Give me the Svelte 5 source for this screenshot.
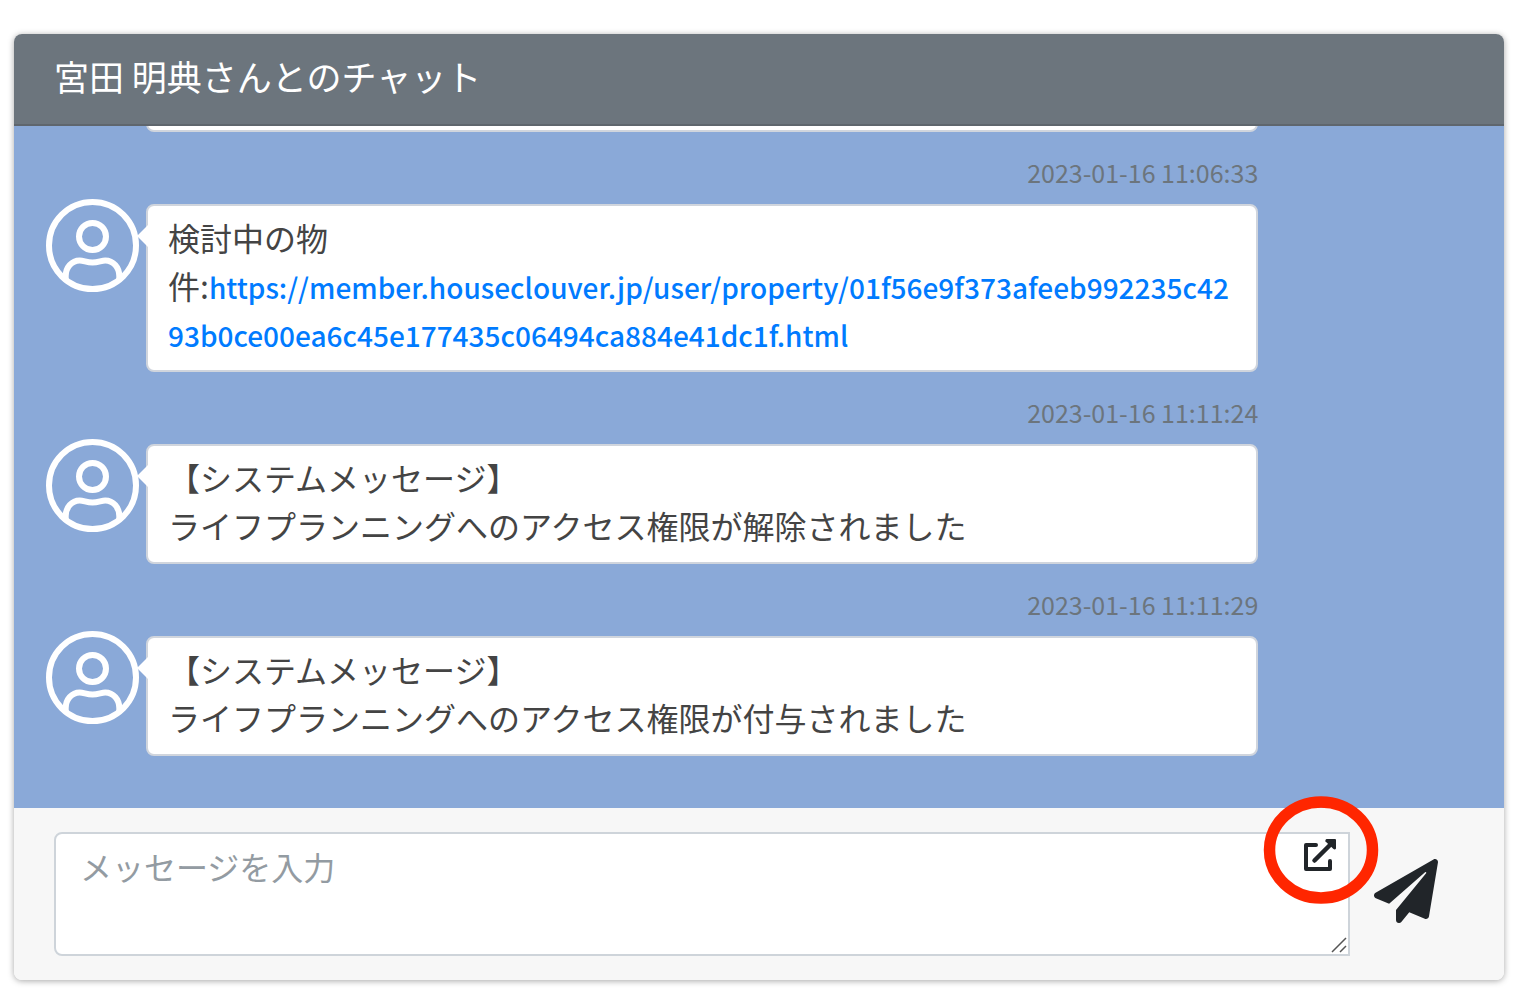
<script>
  const messages = [
    {
      time: '2023-01-16 11:06:33',
      lines: ['検討中の物'],
      label: '件:',
      link: 'https://member.houseclouver.jp/user/property/01f56e9f373afeeb992235c4293b0ce00ea6c45e177435c06494ca884e41dc1f.html'
    },
    {
      time: '2023-01-16 11:11:24',
      lines: ['【システムメッセージ】', 'ライフプランニングへのアクセス権限が解除されました']
    },
    {
      time: '2023-01-16 11:11:29',
      lines: ['【システムメッセージ】', 'ライフプランニングへのアクセス権限が付与されました']
    }
  ];
  let draft = $state('');
</script>

<main class="card">
  <header class="head"><h1>宮田 明典さんとのチャット</h1></header>

  <section class="log">
    <div class="message"><div class="bubble earlier"></div></div>
    {#each messages as m}
      <article class="message">
        <time class="time">{m.time}</time>
        <svg class="avatar" viewBox="0 0 93 93" fill="none" stroke="#fff" stroke-width="6" aria-hidden="true">
          <circle cx="46.5" cy="46.5" r="43.5" />
          <circle cx="46.5" cy="37.5" r="13.5" />
          <path d="M19.7 80v-3c0-8.5 6-15.5 14-15.5 4 0 7 2 12.8 2s8.800-2 12.800-2c8 0 14 7 14 15.500v3" />
        </svg>
        <div class="bubble">
          {#each m.lines as line}<p>{line}</p>{/each}
          {#if m.link}<p>{m.label}<a href={m.link}>{m.link}</a></p>{/if}
        </div>
      </article>
    {/each}
  </section>

  <form class="foot" onsubmit={(e) => e.preventDefault()}>
    <div class="field">
      <textarea aria-label="メッセージを入力" placeholder="メッセージを入力" bind:value={draft}></textarea>
      <svg class="grip" viewBox="0 0 16 16" stroke="#555" stroke-width="1.5" aria-hidden="true">
        <path d="M1 15 15 1M9 15l6-6" />
      </svg>
      <button class="expand" type="button" aria-label="別ウィンドウで開く">
        <svg viewBox="0 0 32 32" fill="none" stroke="#212529" stroke-width="4" stroke-linejoin="round" stroke-linecap="round">
          <path d="M12 6H2v24h24v-8" />
          <path d="M10.500 21.500 26 6" stroke-width="4.500" />
          <path d="M22.500 0H31q1 0 1 1v8.500q-1 1.500-2.500 .5l-8-7.500q-.8-1.800 1-2.500z" fill="#212529" stroke="none" />
        </svg>
      </button>
      <svg class="ring" viewBox="0 0 116 108" fill="none" stroke="#ff2600" stroke-width="11.500" aria-hidden="true">
        <ellipse cx="58" cy="54" rx="51.500" ry="48" />
      </svg>
    </div>
    <button class="send" type="submit" aria-label="送信">
      <svg viewBox="0 0 512 512" fill="#212529">
        <path d="M476 3.200L12.500 270.600c-18.100 10.400-15.800 35.600 2.200 43.200L121 358.400l287.300-253.200c5.500-4.900 13.300 2.600 8.600 8.300L176 407v80.500c0 23.600 28.500 32.900 42.500 15.800L282 426l124.600 52.200c14.200 6 30.400-2.900 33-18.200l72-432C515 7.800 493.300-6.800 476 3.200z" />
      </svg>
    </button>
  </form>
</main>

<style>
  :global(body) {
    background: #fff;
  }
  * {
    box-sizing: border-box;
  }
  .card {
    display: flex;
    flex-direction: column;
    height: calc(100vh - 47px);
    margin: 34px 22px 13px 14px;
    border-radius: 8px;
    box-shadow: 0 1px 6px rgba(0, 0, 0, 0.35);
    font-family: 'Noto Sans CJK JP', sans-serif;
    font-size: 32px;
    line-height: 48px;
    color: #444;
  }
  .head {
    padding: 21px 40px 27px;
    border-bottom: 2px solid #5f666d;
    border-radius: 8px 8px 0 0;
    background: #6c757d;
    color: #fff;
  }
  h1 {
    margin: 0;
    font-size: 35px;
    line-height: 42px;
    font-weight: 400;
  }
  .log {
    flex: 1;
    min-height: 0;
    display: flex;
    flex-direction: column;
    justify-content: flex-end;
    gap: 22px;
    padding: 0 32px 52px;
    overflow: hidden;
    background: #8aa9d8;
  }
  .message {
    display: grid;
    grid-template-columns: 94px 78%;
    column-gap: 6px;
    align-items: start;
    flex: none;
  }
  .time {
    grid-column: 2;
    margin-bottom: 14px;
    font-size: 25px;
    line-height: 36px;
    text-align: right;
    color: #6c757d;
  }
  .avatar {
    grid-column: 1;
    width: 93px;
    height: 93px;
    margin-top: -5px;
  }
  .bubble {
    grid-column: 2;
    position: relative;
    padding: 7px 20px 13px;
    border: 2px solid #d0d5dd;
    border-radius: 8px;
    background: #fff;
    word-break: break-all;
  }
  .bubble::before {
    content: '';
    position: absolute;
    left: -11px;
    top: 18px;
    border: solid transparent;
    border-width: 12px 12px 12px 0;
    border-right-color: #fff;
  }
  .earlier {
    min-height: 120px;
  }
  p {
    margin: 0;
  }
  a {
    color: #007bff;
    font-size: 28px;
    line-height: 28px;
    font-weight: 500;
    text-decoration: none;
  }
  .foot {
    display: flex;
    align-items: center;
    gap: 24px;
    padding: 24px 66px 24px 40px;
    border-radius: 0 0 8px 8px;
    background: #f7f7f7;
  }
  .field {
    position: relative;
    flex: 1;
    display: flex;
  }
  textarea {
    flex: 1;
    height: 124px;
    padding: 8px 24px;
    border: 2px solid #ced4da;
    border-radius: 8px 0 0 8px;
    background: #fff;
    font: inherit;
    color: #495057;
    resize: none;
    outline: 0;
  }
  textarea::placeholder {
    color: #939ba2;
    opacity: 1;
  }
  button {
    padding: 0;
    border: 0;
    background: none;
    cursor: pointer;
  }
  svg {
    display: block;
  }
  .expand {
    position: absolute;
    right: 14px;
    top: 7px;
    width: 32px;
    height: 32px;
  }
  .grip {
    position: absolute;
    right: 3px;
    bottom: 3px;
    width: 16px;
    height: 16px;
  }
  .ring {
    position: absolute;
    right: -29px;
    top: -36px;
    width: 116px;
    height: 108px;
    pointer-events: none;
  }
  .send {
    width: 64px;
    height: 64px;
    margin-bottom: 6px;
  }
</style>
